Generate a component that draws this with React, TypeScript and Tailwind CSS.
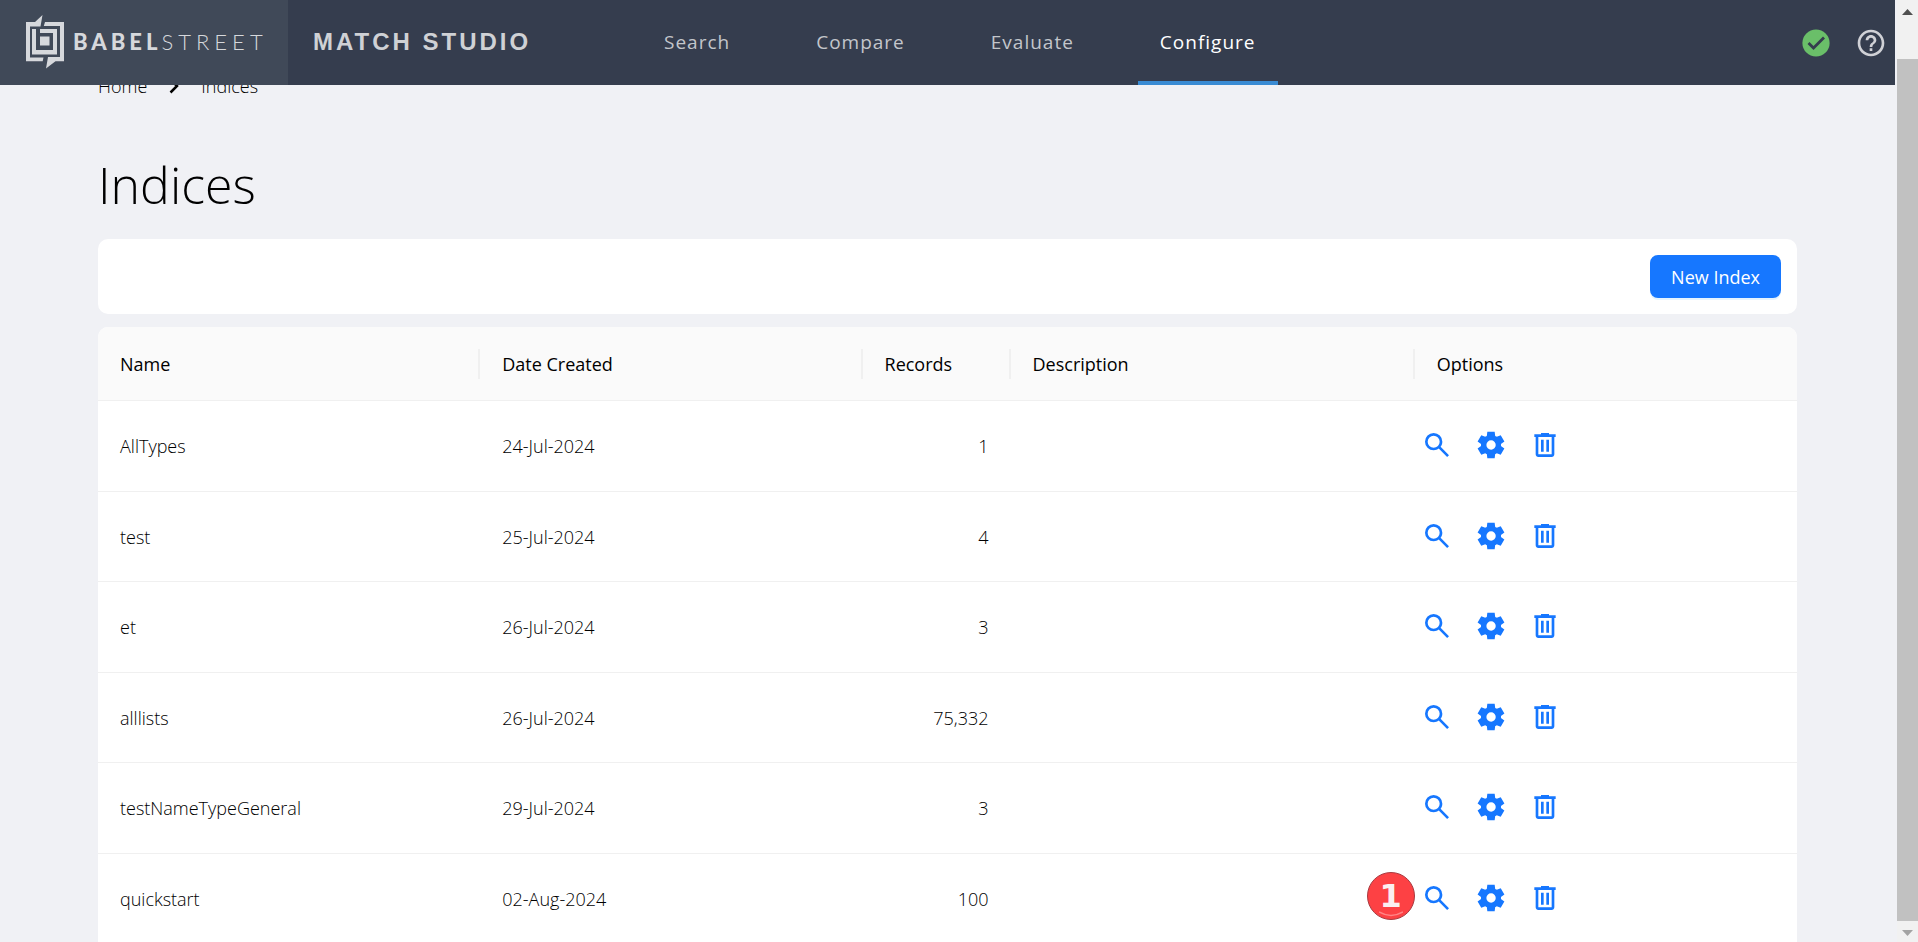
import React from 'react';
import clsx from 'clsx';

type IndexRow = {
    name: string;
    created: string;
    records: string;
    badge?: string;
};

const NAV_ITEMS = ['Search', 'Compare', 'Evaluate', 'Configure'];
const ACTIVE_ITEM = 'Configure';

const INDICES: IndexRow[] = [
    { name: 'AllTypes', created: '24-Jul-2024', records: '1' },
    { name: 'test', created: '25-Jul-2024', records: '4' },
    { name: 'et', created: '26-Jul-2024', records: '3' },
    { name: 'alllists', created: '26-Jul-2024', records: '75,332' },
    { name: 'testNameTypeGeneral', created: '29-Jul-2024', records: '3' },
    { name: 'quickstart', created: '02-Aug-2024', records: '100', badge: '1' },
];

const SEARCH_PATH = 'M784-120 532-372q-30 24-69 38t-83 14q-109 0-184.5-75.5T120-580q0-109 75.5-184.5T380-840q109 0 184.5 75.5T640-580q0 44-14 83t-38 69l252 252-56 56ZM380-400q75 0 127.5-52.5T560-580q0-75-52.5-127.5T380-760q-75 0-127.5 52.5T200-580q0 75 52.5 127.5T380-400Z';
const SETTINGS_PATH = 'm370-80-16-128q-13-5-24.5-12T307-235l-119 50L78-375l103-78q-1-7-1-13.5v-27q0-6.5 1-13.5L78-585l110-190 119 50q11-8 23-15t24-12l16-128h220l16 128q13 5 24.5 12t22.5 15l119-50 110 190-103 78q1 7 1 13.5v27q0 6.5-2 13.5l103 78-110 190-118-50q-11 8-23 15t-24 12L590-80H370Zm112-260q58 0 99-41t41-99q0-58-41-99t-99-41q-59 0-99.5 41T342-480q0 58 40.5 99t99.5 41Z';
const DELETE_PATH = 'M280-120q-33 0-56.5-23.5T200-200v-520h-40v-80h200v-40h240v40h200v80h-40v520q0 33-23.5 56.5T680-120H280Zm400-600H280v520h400v-520ZM360-280h80v-360h-80v360Zm160 0h80v-360h-80v360Z';

const ActionButton = ({ label, path }: { label: string; path: string }) => (
    <button type="button" aria-label={label} className="text-[#1677ff] cursor-pointer">
        <svg viewBox="0 -960 960 960" className="block size-8" fill="currentColor">
            <path d={path} />
        </svg>
    </button>
);

const LogoMark = () => (
    <svg viewBox="0 0 38 54" className="h-[54px] w-[38px]" fill="#d6d8dc">
        {/* outer brackets with the speech tails */}
        <path d="M0 7h9l7.500-7-2 11.500H4v31h13.500l-.8 3.800H0z" />
        <path d="M19 7h19v39.300h-8.500L20 53.500l2-11.500h12V11H17.800z" />
        {/* inner spiral */}
        <path d="M6 14h4v21h17V18H14v-4h17v25.500H6z" />
        <path d="M14 21.500h9.500v9H14z" />
    </svg>
);

const Header = () => (
    <header className="relative z-10 flex h-[85px] shrink-0 items-stretch bg-[#353d4e]">
        <a href="#" className="flex w-72 shrink-0 items-center gap-[9px] bg-[#404958] pb-[2px] pl-[26px]">
            <LogoMark />
            <span className="flex font-['Lato',sans-serif] text-[22px] text-[#d6d8dc]">
                <span className="font-black tracking-[4px]">BABEL</span>
                <span className="font-light tracking-[5px]">STREET</span>
            </span>
        </a>
        <div className="flex w-[354px] shrink-0 items-center pb-[2px] pl-[25px] font-['Liberation_Sans',sans-serif] text-2xl font-bold tracking-[3px] text-[#cfd1d5]">
            MATCH STUDIO
        </div>
        <nav className="flex items-stretch gap-[42px] text-[19px] tracking-[1px]">
            {NAV_ITEMS.map((item) => (
                <a
                    key={item}
                    href="#"
                    className={clsx(
                        'flex items-center border-y-4 border-t-transparent px-[22px]',
                        item === ACTIVE_ITEM ? 'border-b-[#398bd3] text-white' : 'border-b-transparent text-[#c3c6cb]'
                    )}
                >
                    {item}
                </a>
            ))}
        </nav>
        <div className="ml-auto flex items-center gap-[23px] pr-2">
            <button type="button" aria-label="Server status">
                <svg viewBox="0 0 32 32" className="block size-8">
                    <circle cx="16" cy="16" r="13.600" fill="#6abf69" />
                    <path d="M8.500 16l5 5L24 10.500" fill="none" stroke="#353d4e" strokeWidth="2.800" />
                </svg>
            </button>
            <button type="button" aria-label="Help" className="text-[#d0d1d6]">
                <svg viewBox="0 0 24 24" className="block size-8" fill="currentColor">
                    <path d="M11 18h2v-2h-2v2zm1-16C6.480 2 2 6.480 2 12s4.480 10 10 10 10-4.480 10-10S17.520 2 12 2zm0 18c-4.410 0-8-3.590-8-8s3.590-8 8-8 8 3.590 8 8-3.590 8-8 8zm0-14c-2.210 0-4 1.790-4 4h2c0-1.100.9-2 2-2s2 .9 2 2c0 2-3 1.750-3 5h2c0-2.250 3-2.500 3-5 0-2.210-1.790-4-4-4z" />
                </svg>
            </button>
        </div>
    </header>
);

const Breadcrumb = () => (
    <nav aria-label="Breadcrumb" className="-mt-[13px] flex h-7 items-center text-lg font-light text-black">
        <a href="#">Home</a>
        <svg viewBox="0 0 10 16" className="mx-[22px] h-4 w-[10px]" fill="none" stroke="currentColor" strokeWidth="2.500">
            <path d="M1.500 1.500L8 8l-6.500 6.500" />
        </svg>
        <a href="#">Indices</a>
    </nav>
);

const HeadCell = ({ children, last }: { children: React.ReactNode; last?: boolean }) => (
    <th className="h-[74px] border-b border-[#f0f0f0] p-0 font-medium">
        <div className={clsx('flex h-[30px] items-center pl-[22px]', !last && 'border-r-2 border-[#f0f0f0]')}>{children}</div>
    </th>
);

const IndicesTable = () => (
    <table className="w-full table-fixed border-separate border-spacing-0 overflow-hidden rounded-t-[10px] bg-white text-left text-lg text-black">
        <colgroup>
            <col className="w-[22.5%]" />
            <col className="w-[22.5%]" />
            <col className="w-[148px]" />
            <col />
            <col className="w-[22.5%]" />
        </colgroup>
        <thead className="bg-[#fafafa]">
            <tr>
                <HeadCell>Name</HeadCell>
                <HeadCell>Date Created</HeadCell>
                <HeadCell>Records</HeadCell>
                <HeadCell>Description</HeadCell>
                <HeadCell last>Options</HeadCell>
            </tr>
        </thead>
        <tbody className="font-light">
            {INDICES.map((row) => (
                <tr key={row.name} className="h-[91px] even:h-[90px] [&>td]:border-b [&>td]:border-[#f0f0f0]">
                    <td className="px-[22px]">{row.name}</td>
                    <td className="px-[22px]">{row.created}</td>
                    <td className="px-[22px] text-right">{row.records}</td>
                    <td />
                    <td className="relative pb-[2px] pl-[6px]">
                        {row.badge && (
                            <span className="absolute top-[18px] -left-12 flex size-12 items-center justify-center rounded-full border border-[#a83a40] bg-[#fd4144] font-['DejaVu_Sans',sans-serif] text-[32px] leading-none font-bold text-[#fbeff0]">
                                {row.badge}
                                <svg viewBox="0 0 24 6" className="absolute bottom-[2px] h-[6px] w-6" fill="none" stroke="#ff8485" strokeWidth="1.500">
                                    <path d="M0 1q12 7 24 0" />
                                </svg>
                            </span>
                        )}
                        <div className="flex gap-[22px]">
                            <ActionButton label={`Search ${row.name}`} path={SEARCH_PATH} />
                            <ActionButton label={`Configure ${row.name}`} path={SETTINGS_PATH} />
                            <ActionButton label={`Delete ${row.name}`} path={DELETE_PATH} />
                        </div>
                    </td>
                </tr>
            ))}
        </tbody>
    </table>
);

const Scrollbar = () => (
    <div className="flex w-[21px] shrink-0 flex-col items-center bg-[#f1f1f1]" aria-hidden="true">
        <svg viewBox="0 0 21 21" className="h-[21px] w-full shrink-0">
            <path d="M5 15h11l-5.500-6z" fill="#505050" />
        </svg>
        <div className="mt-[38px] w-full flex-1 bg-[#c1c1c1]" />
        <svg viewBox="0 0 21 21" className="h-[21px] w-full shrink-0">
            <path d="M5 9h11l-5.500 6z" fill="#a3a3a3" />
        </svg>
    </div>
);

export default function App() {
    return (
        <div className="flex h-screen overflow-hidden bg-[#f0f1f5] font-['Open_Sans','Noto_Sans',sans-serif]">
            <div className="mr-[2px] flex min-w-0 flex-1 flex-col">
                <Header />
                <main className="px-[98px]">
                    <Breadcrumb />
                    <h1 className="mt-[49px] text-[50px] leading-[72px] font-light text-black">Indices</h1>
                    <div className="mt-[18px] flex justify-end rounded-[10px] bg-white p-4">
                        <button
                            type="button"
                            className="h-[43px] cursor-pointer rounded-lg bg-[#1677ff] px-[21px] text-lg text-white shadow-[0_2px_0_rgba(5,145,255,0.1)]"
                        >
                            New Index
                        </button>
                    </div>
                    <div className="mt-[13px]">
                        <IndicesTable />
                    </div>
                </main>
            </div>
            <Scrollbar />
        </div>
    );
}
